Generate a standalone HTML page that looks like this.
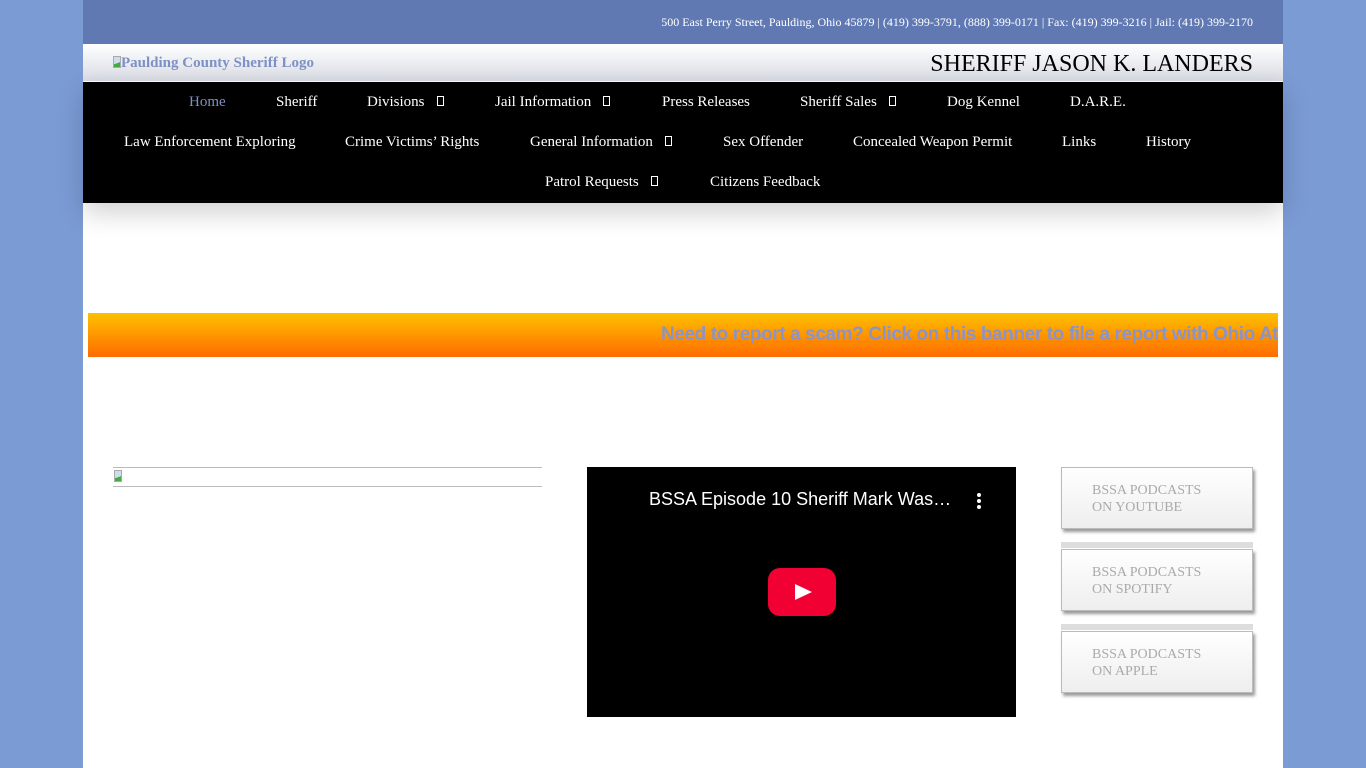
<!DOCTYPE html>
<html><head><meta charset="utf-8"><style>
*{margin:0;padding:0;box-sizing:border-box}
body{width:1366px;height:768px;overflow:hidden;background:#7b9bd5;font-family:"Liberation Serif",serif}
.wrap{position:absolute;left:83px;top:0;width:1200px;height:768px;background:#fff}
.top{height:44px;background:#6079b3;color:#fff;font-size:12px;text-align:right;padding:15px 30px 0 0}
.hdr{height:38px;background:linear-gradient(#fff,#d9dce4);position:relative;border-bottom:1px solid #fff}
.logo{position:absolute;left:30px;top:11px;color:#7d92c4;font-weight:bold;font-size:15px}
.logo i,.img i{display:inline-block;width:8px;height:12px;border:1px solid #aaa;vertical-align:-1px;background:linear-gradient(160deg,#cde 60%,#4a4 60%)}
.name{position:absolute;right:30px;top:7px;font-size:24px;color:#000;font-family:"Liberation Serif",serif}
.nav{height:121px;background:#000;box-shadow:0 10px 25px rgba(0,0,0,.18);position:relative}
.nav span{position:absolute;color:#fff;font-size:15px;white-space:nowrap}
.nav b{display:inline-block;width:7px;height:10px;border:1px solid #fff;margin-left:12px;vertical-align:0}
.ban{position:absolute;left:5px;top:313px;width:1190px;height:44px;background:linear-gradient(#fdc100,#ff6b00);overflow:hidden}
.ban span{position:absolute;left:573px;top:11px;font-family:"Liberation Sans",sans-serif;font-weight:bold;font-size:19px;color:#8b93c9;text-decoration:underline;white-space:nowrap;letter-spacing:-.4px}
.img{position:absolute;left:30px;top:467px;width:429px;height:20px;border-top:1px solid #bbb;border-bottom:1px solid #bbb;padding:2px 0 0 1px;line-height:0}
.vid{position:absolute;left:504px;top:467px;width:429px;height:250px;background:#000}
.vid .t{position:absolute;left:62px;top:22px;color:#fff;font-family:"Liberation Sans",sans-serif;font-size:18px}
.dot{position:absolute;left:390px;width:4px;height:4px;border-radius:2px;background:#fff}
.play{position:absolute;left:181px;top:101px;width:68px;height:48px;background:#f00033;border-radius:12px}
.play:after{content:"";position:absolute;left:27px;top:16px;border-left:17px solid #fff;border-top:8px solid transparent;border-bottom:8px solid transparent}
.btn{position:absolute;left:978px;width:192px;height:62px;background:linear-gradient(#fff,#eee);border:1px solid #bbb;box-shadow:2px 3px 3px #999;color:#aaa;font-size:14px;padding:14px 0 0 30px;line-height:17px}
.bar{position:absolute;left:978px;width:192px;height:6px;background:#ddd}
</style></head><body>
<div class="wrap">
<div class="top">500 East Perry Street, Paulding, Ohio 45879 | (419) 399-3791, (888) 399-0171 | Fax: (419) 399-3216 | Jail: (419) 399-2170</div>
<div class="hdr"><div class="logo"><i></i>Paulding County Sheriff Logo</div><div class="name">SHERIFF JASON K. LANDERS</div></div>
<div class="nav">
<span style="left:106px;top:12px;color:#7d92c4">Home</span>
<span style="left:193px;top:12px">Sheriff</span>
<span style="left:284px;top:12px">Divisions<b></b></span>
<span style="left:412px;top:12px">Jail Information<b></b></span>
<span style="left:579px;top:12px">Press Releases</span>
<span style="left:717px;top:12px">Sheriff Sales<b></b></span>
<span style="left:864px;top:12px">Dog Kennel</span>
<span style="left:987px;top:12px">D.A.R.E.</span>
<span style="left:41px;top:52px">Law Enforcement Exploring</span>
<span style="left:262px;top:52px">Crime Victims’ Rights</span>
<span style="left:447px;top:52px">General Information<b></b></span>
<span style="left:640px;top:52px">Sex Offender</span>
<span style="left:770px;top:52px">Concealed Weapon Permit</span>
<span style="left:979px;top:52px">Links</span>
<span style="left:1063px;top:52px">History</span>
<span style="left:462px;top:92px">Patrol Requests<b></b></span>
<span style="left:627px;top:92px">Citizens Feedback</span>
</div>
<div class="ban"><span>Need to report a scam? Click on this banner to file a report with Ohio Attorney General</span></div>
<div class="img"><i></i></div>
<div class="vid"><div class="t">BSSA Episode 10 Sheriff Mark Was…</div><div class="dot" style="top:26px"></div><div class="dot" style="top:32px"></div><div class="dot" style="top:38px"></div><div class="play"></div></div>
<div class="btn" style="top:467px">BSSA PODCASTS<br>ON YOUTUBE</div>
<div class="bar" style="top:542px"></div>
<div class="btn" style="top:549px">BSSA PODCASTS<br>ON SPOTIFY</div>
<div class="bar" style="top:624px"></div>
<div class="btn" style="top:631px">BSSA PODCASTS<br>ON APPLE</div>
</div>
</body></html>
